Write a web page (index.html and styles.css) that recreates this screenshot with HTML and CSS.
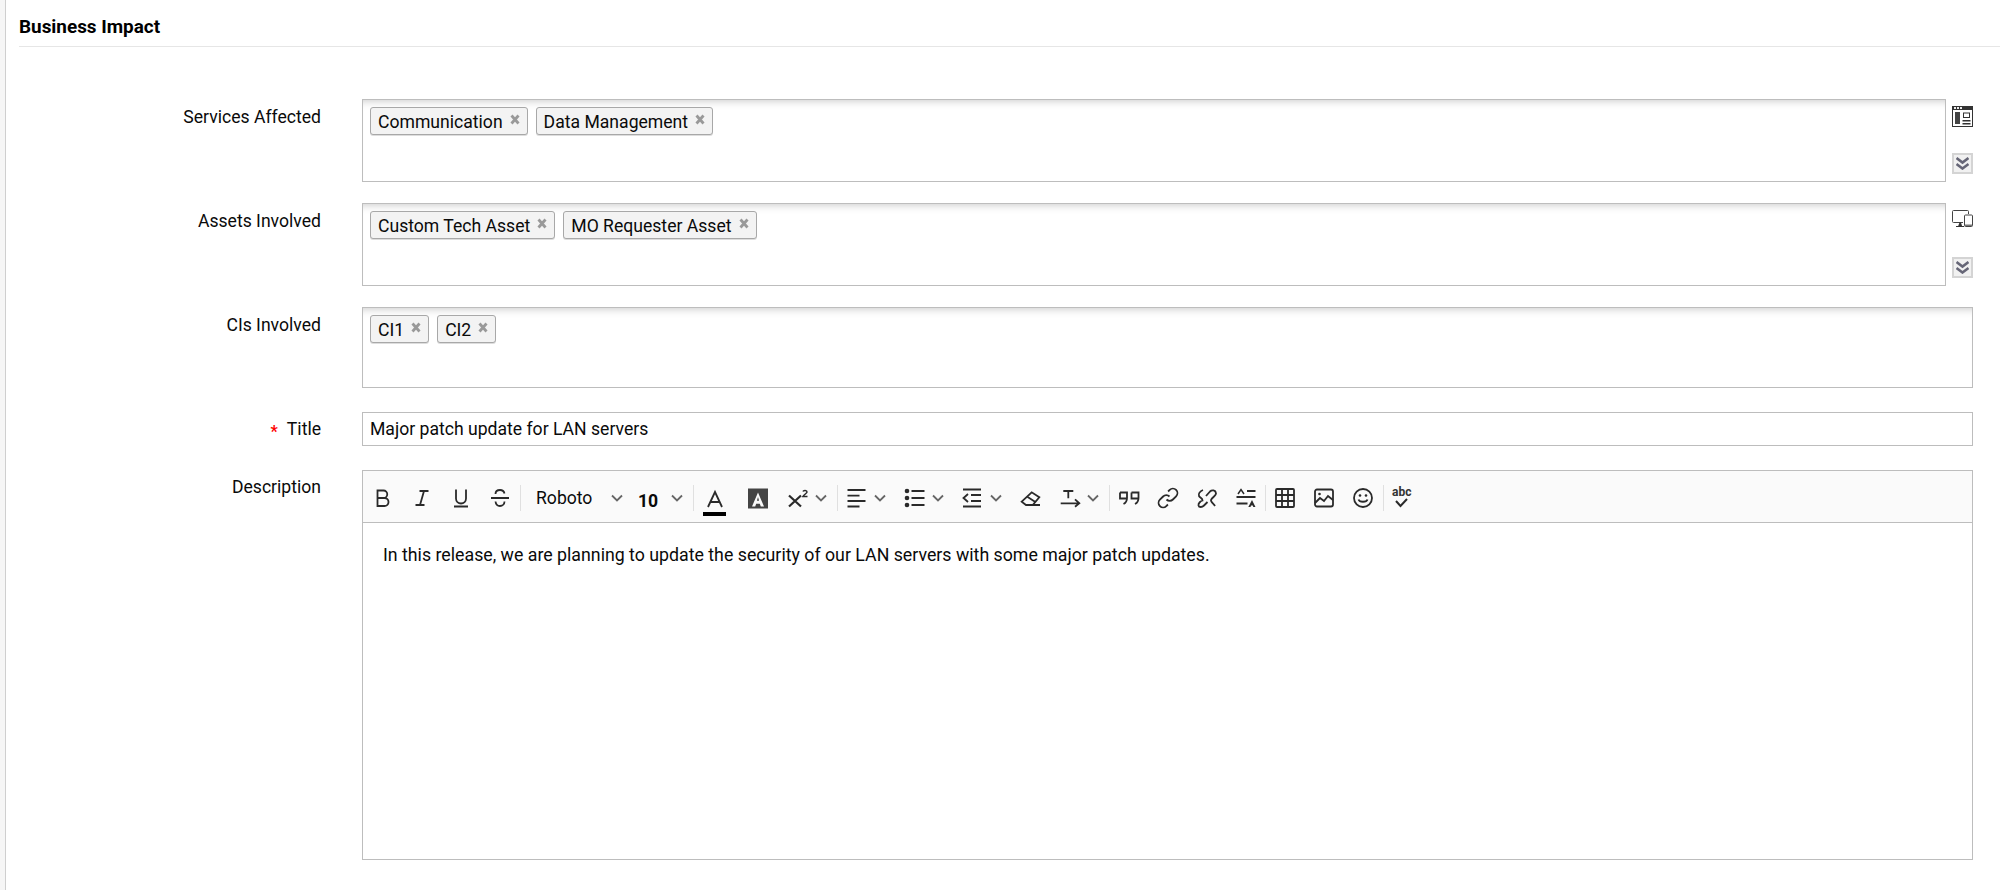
FILE: index.html
```html
<!DOCTYPE html>
<html lang="en">
<head>
<meta charset="utf-8">
<title>Business Impact</title>
<link rel="stylesheet" href="styles.css">
</head>
<body>
<div class="page">
  <div class="rail"></div>
  <main class="main">
    <h2 class="heading">Business Impact</h2>
    <form class="form">
      <div class="row">
        <div class="label label-low">Services Affected</div>
        <div class="field-group">
          <div class="box">
            <span class="chip">Communication<svg class="x" viewBox="0 0 10 11"><path d="M1.500 1.500l7 8M8.500 1.500l-7 8"/></svg></span>
            <span class="chip">Data Management<svg class="x" viewBox="0 0 10 11"><path d="M1.500 1.500l7 8M8.500 1.500l-7 8"/></svg></span>
          </div>
          <div class="side">
            <svg class="side-icon" viewBox="0 0 21 21"><rect x=".5" y=".5" width="20" height="20" fill="#fff" stroke="#333"/><rect x="0" y="0" width="21" height="4" fill="#333"/><path d="M2 1h2v2H2zM5 1h2v2H5zM8 1h2v2H8z" fill="#eee"/><rect x="3" y="6" width="5" height="12" fill="#444"/><rect x="11.500" y="7" width="6" height="4.500" fill="#fff" stroke="#333"/><path d="M10.500 14h8v1.400h-8zM10.500 17h8v1.400h-8z" fill="#333"/></svg>
            <span class="more"><svg viewBox="0 0 13 13"><path d="M.5 1l6 4.500 6-4.500M.5 7l6 4.500 6-4.500"/></svg></span>
          </div>
        </div>
      </div>
      <div class="row">
        <div class="label label-low">Assets Involved</div>
        <div class="field-group">
          <div class="box">
            <span class="chip">Custom Tech Asset<svg class="x" viewBox="0 0 10 11"><path d="M1.500 1.500l7 8M8.500 1.500l-7 8"/></svg></span>
            <span class="chip">MO Requester Asset<svg class="x" viewBox="0 0 10 11"><path d="M1.500 1.500l7 8M8.500 1.500l-7 8"/></svg></span>
          </div>
          <div class="side">
            <svg class="side-icon device" viewBox="0 0 21 17"><path d="M11 12.500H1.500A1 1 0 0 1 .5 11.500V1.500A1 1 0 0 1 1.500.5h14a1 1 0 0 1 1 1V4" fill="none" stroke="#444"/><path d="M6 16.500l1.500-4h1.500l1.200 4z" fill="#333"/><path d="M4 16.500h8" stroke="#333"/><rect x="12.500" y="5" width="8" height="11.500" rx="1" fill="#fff" stroke="#444"/><path d="M13 14.500h7v1.500h-7z" fill="#777"/></svg>
            <span class="more"><svg viewBox="0 0 13 13"><path d="M.5 1l6 4.500 6-4.500M.5 7l6 4.500 6-4.500"/></svg></span>
          </div>
        </div>
      </div>
      <div class="row">
        <div class="label label-low">CIs Involved</div>
        <div class="box box-short">
          <span class="chip">CI1<svg class="x" viewBox="0 0 10 11"><path d="M1.500 1.500l7 8M8.500 1.500l-7 8"/></svg></span>
          <span class="chip">CI2<svg class="x" viewBox="0 0 10 11"><path d="M1.500 1.500l7 8M8.500 1.500l-7 8"/></svg></span>
        </div>
      </div>
      <div class="row row-spaced">
        <div class="label"><span class="req">*</span>Title</div>
        <div class="input">Major patch update for LAN servers</div>
      </div>
      <div class="row row-spaced">
        <div class="label">Description</div>
        <div class="editor">
          <div class="toolbar">
            <span class="btn"><svg viewBox="0 0 24 24"><path d="M6.500 4.500h6a3.700 3.700 0 0 1 0 7.500h-6zM6.500 12h7a4 4 0 0 1 0 8h-7z"/></svg></span>
            <span class="btn"><svg viewBox="0 0 24 24"><path d="M9.500 5h9M5.500 19h9M14 5l-4 14"/></svg></span>
            <span class="btn"><svg viewBox="0 0 24 24"><path d="M7 3.500v9a5 5 0 0 0 10 0v-9M5 20.500h14"/></svg></span>
            <span class="btn"><svg viewBox="0 0 24 24"><path d="M3 12h18M16.500 7.500C16 5.500 14.300 4 12 4c-2.700 0-4.500 1.400-4.500 4M7.500 15.500c.3 2.500 2 4.500 4.500 4.500s4.500-2 4.500-4.500"/></svg></span>
            <span class="sep"></span>
            <span class="select select-font"><span class="select-text">Roboto</span><svg class="chev" viewBox="0 0 10 10"><path d="M0 2.500l5 5 5-5"/></svg></span>
            <span class="select select-size"><span class="select-text size-text">10</span><svg class="chev" viewBox="0 0 10 10"><path d="M0 2.500l5 5 5-5"/></svg></span>
            <span class="sep"></span>
            <span class="btn btn-wide"><svg class="icon-color" viewBox="0 0 36 36"><path d="M11 27l7-15 7 15M13.500 22h9"/><rect class="fill" x="6" y="32" width="23" height="4"/></svg></span>
            <span class="btn btn-wide"><svg viewBox="0 0 24 24"><path class="fill fill-mid" fill-rule="evenodd" d="M2 2.500h20v20H2zM12 6.500L6 20.500h3.200l1-2.800h3.600l1 2.800H18zM12 11l1.100 3.700h-2.200z"/></svg></span>
            <span class="split split-sup"><span class="btn btn-narrow"><svg viewBox="0 0 24 24"><path class="bold" d="M6 9.500l12 11M18 9.500l-12 11"/><path class="thin" d="M20 5.500c.5-1.500 4-1.500 4 .5 0 1.200-2.500 2-4 4.500h4.500"/></svg></span><svg class="chev" viewBox="0 0 10 10"><path d="M0 2.500l5 5 5-5"/></svg></span>
            <span class="sep"></span>
            <span class="split"><span class="btn"><svg viewBox="0 0 24 24"><path d="M2.500 4h18M2.500 9.700h12M2.500 15h18M2.500 20.500h12"/></svg></span><svg class="chev" viewBox="0 0 10 10"><path d="M0 2.500l5 5 5-5"/></svg></span>
            <span class="split"><span class="btn"><svg viewBox="0 0 24 24"><path d="M8.500 5h13M8.500 12h13M8.500 19h13"/><circle class="fill" cx="4" cy="5" r="2.300"/><circle class="fill" cx="4" cy="12" r="2.300"/><circle class="fill" cx="4" cy="19" r="2.300"/></svg></span><svg class="chev" viewBox="0 0 10 10"><path d="M0 2.500l5 5 5-5"/></svg></span>
            <span class="split"><span class="btn"><svg viewBox="0 0 24 24"><path d="M2 3.500h18M2 20.500h18M10 9h10M10 15h10M7 8l-4.500 4L7 16"/></svg></span><svg class="chev" viewBox="0 0 10 10"><path d="M0 2.500l5 5 5-5"/></svg></span>
            <span class="btn"><svg viewBox="0 0 24 24"><path d="M2.700 15.700l10-9.400 7.600 5L13.700 19H7zM8.300 10.700l7.700 5M7 19h14"/></svg></span>
            <span class="split"><span class="btn"><svg viewBox="0 0 24 24"><path d="M5.300 5h10M10.300 5v7.300M2.700 17.300h18.600M17 13.300l4.300 4-4.300 3.400"/></svg></span><svg class="chev" viewBox="0 0 10 10"><path d="M0 2.500l5 5 5-5"/></svg></span>
            <span class="sep"></span>
            <span class="btn"><svg viewBox="0 0 24 24"><path d="M3 6.500h7V12c0 3-1.500 5-3.500 6M3 6.500v6h7M14.500 6.500h7V12c0 3-1.500 5-3.500 6M14.500 6.500v6h7"/></svg></span>
            <span class="btn"><svg viewBox="0 0 24 24"><path d="M10.500 13.500a4.500 4.500 0 0 0 6.400 0l3.200-3.200a4.500 4.500 0 0 0-6.400-6.400l-1.600 1.600M13.500 10.500a4.500 4.500 0 0 0-6.400 0l-3.200 3.200a4.500 4.500 0 0 0 6.400 6.400l1.600-1.600"/></svg></span>
            <span class="btn"><svg viewBox="0 0 24 24"><path d="M8 4C5 5 3 8 4 10c1 2 3.500 2 3.500 4.500C6 15 3 17 3.500 19.500 4 21.500 7 21.500 9 19.500l3.500-3.500"/><path d="M11 10l4-4.500c2-2 5.500-1.500 6 1.500.5 2.500-4 4.500-5 7-.5 2 3 4 4 6"/></svg></span>
            <span class="btn"><svg viewBox="0 0 24 24"><path d="M2.500 11h19M2.500 17.500h11M13 5h8.500"/><path class="thin" d="M4 8l3-4.500L10 8"/><path class="fill" d="M18 14l3.500 7h-2.200l-.5-1.500h-1.800l-.5 1.500h-2.200z"/></svg></span>
            <span class="sep sep-tight"></span>
            <span class="btn"><svg viewBox="0 0 24 24"><rect x="3" y="3" width="18" height="18" rx="1"/><path d="M3 9h18M3 15h18M9 3v18M15 3v18"/></svg></span>
            <span class="btn"><svg viewBox="0 0 24 24"><rect x="3" y="3.500" width="18" height="17" rx="2"/><path d="M3 17l5-5 4 3 4-5 5 4"/><circle class="fill" cx="7.500" cy="8" r="1.300"/></svg></span>
            <span class="btn"><svg viewBox="0 0 24 24"><circle cx="12" cy="12" r="9"/><path d="M7.500 13.500c1 3 8 3 9 0"/><circle class="fill" cx="9" cy="9.500" r="1.300"/><circle class="fill" cx="15" cy="9.500" r="1.300"/></svg></span>
            <span class="sep"></span>
            <span class="btn"><span class="abc">abc</span><svg class="check" viewBox="0 0 20 10"><path d="M4 3l4.500 5L15 1"/></svg></span>
          </div>
          <div class="editor-body">In this release, we are planning to update the security of our LAN servers with some major patch updates.</div>
        </div>
      </div>
    </form>
  </main>
</div>
</body>
</html>
```

FILE: styles.css
```css
* { box-sizing: border-box; }

html, body {
  margin: 0;
  height: 100%;
  background: #fff;
}

body {
  font-family: Roboto, "Liberation Sans", sans-serif;
  font-size: 17.6px;
  line-height: 20px;
  color: #0a0a0a;
  overflow: hidden;
}

.page {
  display: flex;
  min-height: 890px;
}

.rail {
  flex: none;
  width: 6px;
  background: #f6f6f6;
  border-right: 1px solid #cfcfcf;
}

.main {
  flex: 1;
  min-width: 0;
  padding-left: 13px;
}

.heading {
  margin: 0;
  height: 47px;
  padding-top: 17px;
  font-size: 18.9px;
  font-weight: 700;
  line-height: 20px;
  color: #000;
  border-bottom: 1px solid #e6e6e6;
}

.form {
  display: flex;
  flex-direction: column;
  gap: 21px;
  margin-top: 52px;
  padding-right: 27px;
}

.row {
  display: flex;
  gap: 41px;
}

.row-spaced {
  margin-top: 3px;
}

.label {
  flex: none;
  width: 302px;
  padding-top: 7px;
  text-align: right;
}

.label-low {
  padding-top: 8px;
}

.req {
  display: inline-block;
  margin-right: 9px;
  color: #f00;
  font-size: 16px;
  font-weight: 700;
  transform: translateY(2px);
}

.field-group {
  flex: 1;
  min-width: 0;
  display: flex;
  gap: 6px;
}

.box {
  flex: 1;
  min-width: 0;
  height: 83px;
  display: flex;
  align-items: flex-start;
  gap: 8px;
  padding: 7px;
  border: 1px solid #bdbdbd;
  box-shadow: inset 0 9px 8px -8px #c8c8c8;
}

.box-short {
  height: 81px;
}

.chip {
  height: 28px;
  display: inline-flex;
  align-items: center;
  padding: 1px 7px 0 7px;
  border: 1px solid #a8a8a8;
  border-radius: 3px;
  background: #f3f3f3;
  box-shadow: 0 1px 0 #ddd;
  white-space: nowrap;
}

.x {
  width: 10px;
  height: 11px;
  margin-left: 7px;
  margin-top: -4px;
  fill: none;
  stroke: #999;
  stroke-width: 2.800;
}

.side {
  flex: none;
  width: 21px;
  display: flex;
  flex-direction: column;
  justify-content: space-between;
  padding: 7px 0 8px;
}

.side-icon {
  display: block;
  width: 21px;
  height: 21px;
}

.device {
  height: 17px;
}

.more {
  display: block;
  width: 21px;
  height: 21px;
  padding: 2px;
  background: #f1f1f1;
  border: 2px solid #d4d4d4;
}

.more svg {
  display: block;
  width: 13px;
  height: 13px;
  fill: none;
  stroke: #667;
  stroke-width: 2.600;
}

.input {
  flex: 1;
  min-width: 0;
  height: 34px;
  padding: 6px 7px;
  border: 1px solid #bdbdbd;
}

.editor {
  flex: 1;
  min-width: 0;
  height: 390px;
  border: 1px solid #bdbdbd;
}

.toolbar {
  display: flex;
  align-items: center;
  gap: 7px;
  height: 52px;
  padding: 3px 0 0 4px;
  background: #fafafa;
  border-bottom: 1px solid #bdbdbd;
}

.btn {
  flex: none;
  position: relative;
  width: 32px;
  height: 26px;
  display: flex;
  align-items: center;
  justify-content: center;
}

.btn > svg {
  flex: none;
  width: 24px;
  height: 24px;
  overflow: visible;
  fill: none;
  stroke: #2a2a2a;
  stroke-width: 1.800;
}

.btn .fill {
  fill: #2a2a2a;
  stroke: none;
}

.btn .fill-mid {
  fill: #444;
}

.btn .thin {
  stroke-width: 1.500;
}

.btn .bold {
  stroke-width: 2.200;
}

.btn-wide {
  width: 36px;
}

.btn-narrow {
  width: 24px;
}

.btn > .icon-color {
  width: 36px;
  height: 36px;
}

.icon-color .fill {
  fill: #000;
}

.sep {
  flex: none;
  width: 1px;
  height: 26px;
  margin: 0 -4px 0 -3px;
  background: #e0e0e0;
}

.sep-tight {
  margin: 0 -4px 0 -4px;
}

.split {
  flex: none;
  display: flex;
  align-items: center;
  gap: 2px;
  margin-right: 7px;
}

.split-sup {
  gap: 9px;
}

.chev {
  flex: none;
  width: 10px;
  height: 10px;
  overflow: visible;
  fill: none;
  stroke: #666;
  stroke-width: 1.800;
}

.select {
  flex: none;
  display: flex;
  align-items: center;
  margin-right: 7px;
}

.select-font {
  padding-left: 12px;
}

.select-size {
  padding-left: 2px;
}

.select-font .select-text {
  width: 76px;
}

.size-text {
  width: 34px;
  margin-top: 5px;
  font-weight: 700;
}

.abc {
  position: absolute;
  left: 5px;
  top: 1px;
  font-size: 12px;
  font-weight: 700;
  line-height: 12px;
  color: #333;
}

.btn > .check {
  position: absolute;
  left: 5px;
  top: 13px;
  width: 20px;
  height: 10px;
  stroke-width: 2;
}

.editor-body {
  padding: 22px 20px;
  font-size: 17.75px;
}
```
